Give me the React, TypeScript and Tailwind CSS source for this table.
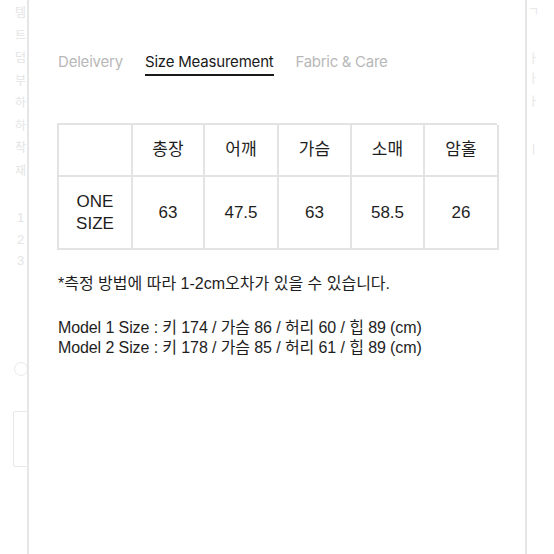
import React from "react";

const kr = { fontFamily: '"Liberation Sans", "Noto Sans CJK KR", sans-serif' };
const tabFont = { fontFamily: 'Inter, "Noto Sans CJK KR", sans-serif' };

const headers = ["", "총장", "어깨", "가슴", "소매", "암홀"];
const values = ["63", "47.5", "63", "58.5", "26"];

export default function App() {
  const leftGlyphs = ["템", "트", "덤", "부", "하", "하", "착", "재"];
  return (
    <div className="flex w-[554px] h-[554px] bg-white overflow-hidden" style={kr}>
      {/* faded background left */}
      <div className="w-[27px] shrink-0 overflow-hidden text-[#e4e4e4]">
        <div className="pl-[15px] pt-[2px] flex flex-col">
          {leftGlyphs.map((g, i) => (
            <div key={i} className="h-[22.5px] text-[12px] leading-[22.5px] whitespace-nowrap">
              {g}
            </div>
          ))}
          <div className="mt-[25px] flex flex-col pl-[2px]">
            {["1", "2", "3"].map((g, i) => (
              <div key={i} className="h-[21.5px] text-[13px] leading-[21.5px] whitespace-nowrap">
                {g}
              </div>
            ))}
          </div>
          <div className="mt-[90px] ml-[-1px] w-[14px] h-[14px] rounded-full border border-[#eaeaea]" />
          <div className="mt-[35px] ml-[-2px] w-[20px] h-[56px] border border-[#e8e8e8] rounded-[2px]" />
        </div>
      </div>

      {/* panel */}
      <div className="w-[500px] shrink-0 h-full border-x-2 border-[#e6e6e6] bg-white pl-[28px] pt-[52px]">
        <div className="flex gap-[22px] ml-[1px]" style={tabFont}>
          <div className="text-[15px] leading-[20px] text-[#b8b8b8] pb-[4px] tracking-[-0.2px]">Deleivery</div>
          <div className="text-[15px] leading-[20px] text-[#1a1a1a] pb-[2px] border-b-2 border-[#1a1a1a] tracking-[-0.2px]">
            Size Measurement
          </div>
          <div className="text-[15px] leading-[20px] text-[#b8b8b8] pb-[4px] tracking-[-0.3px]">Fabric &amp; Care</div>
        </div>

        <div className="mt-[47px] w-[440px] grid grid-cols-[74px_72px_74px_73px_73px_74px] border-l-2 border-t-2 border-[#e3e3e3] text-[#1e1e1e]">
          {headers.map((h, i) => (
            <div
              key={"h" + i}
              className="h-[52px] border-r-2 border-b-2 border-[#e3e3e3] flex items-center justify-center text-[17px]"
            >
              {h}
            </div>
          ))}
          <div className="h-[73px] border-r-2 border-b-2 border-[#e3e3e3] flex items-center justify-center text-center text-[17px] leading-[22px]">
            ONE
            <br />
            SIZE
          </div>
          {values.map((v, i) => (
            <div
              key={"v" + i}
              className="h-[73px] border-r-2 border-b-2 border-[#e3e3e3] flex items-center justify-center text-[17px]"
            >
              {v}
            </div>
          ))}
        </div>

        <div className="mt-[24px] ml-[1px] text-[16px] leading-[20px] text-[#1e1e1e]">
          *측정 방법에 따라 1-2cm오차가 있을 수 있습니다.
        </div>

        <div className="mt-[24px] ml-[1px] text-[16px] leading-[20px] text-[#1e1e1e] tracking-[-0.1px]">
          <div>Model 1 Size : 키 174 / 가슴 86 / 허리 60 / 힙 89 (cm)</div>
          <div>Model 2 Size : 키 178 / 가슴 85 / 허리 61 / 힙 89 (cm)</div>
        </div>
      </div>

      {/* faded background right */}
      <div className="flex-1 overflow-hidden text-[#e6e6e6] pl-[1px]">
        <div className="flex flex-col text-[12px] leading-[20px]">
          <div className="mt-[2px]">ㄱ</div>
          <div className="mt-[27px]">ㅏ</div>
          <div className="mt-[0px]">ㅏ</div>
          <div className="mt-[3px]">ㅏ</div>
          <div className="mt-[28px]">ㅣ</div>
        </div>
      </div>
    </div>
  );
}
